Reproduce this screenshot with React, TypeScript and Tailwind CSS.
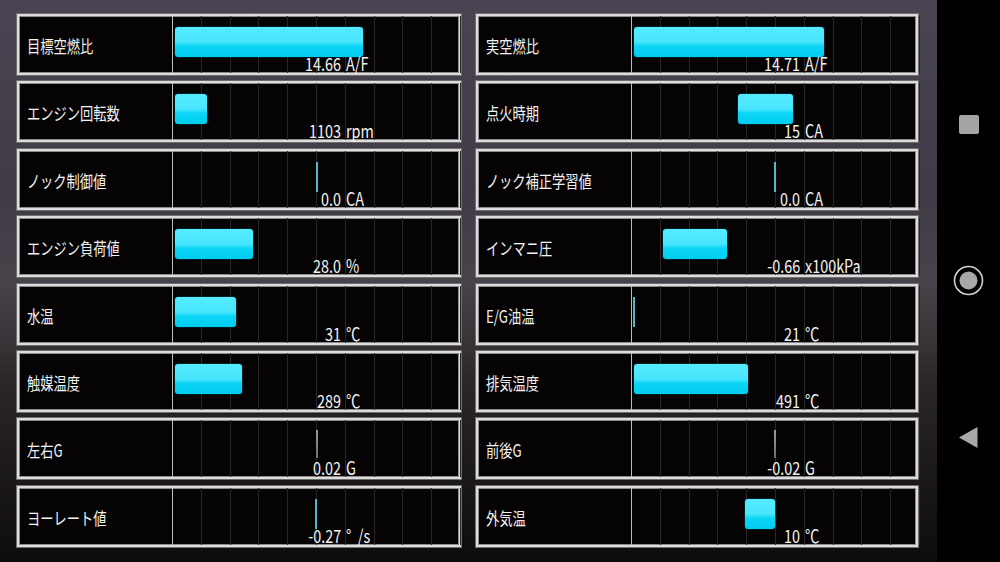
import React from 'react';

type Marker = { kind: 'bar' | 'line' | 'gray'; left: number; width?: number };

type Gauge = {
    label: string;
    value: string;
    unit: string;
    marker: Marker;
};

// left column / right column, row by row
const LEFT: Gauge[] = [
    { label: '目標空燃比', value: '14.66', unit: 'A/F', marker: { kind: 'bar', left: 2, width: 188 } },
    { label: 'エンジン回転数', value: '1103', unit: 'rpm', marker: { kind: 'bar', left: 2, width: 32 } },
    { label: 'ノック制御値', value: '0.0', unit: 'CA', marker: { kind: 'line', left: 143 } },
    { label: 'エンジン負荷値', value: '28.0', unit: '%', marker: { kind: 'bar', left: 2, width: 78 } },
    { label: '水温', value: '31', unit: '℃', marker: { kind: 'bar', left: 2, width: 61 } },
    { label: '触媒温度', value: '289', unit: '℃', marker: { kind: 'bar', left: 2, width: 67 } },
    { label: '左右G', value: '0.02', unit: 'G', marker: { kind: 'gray', left: 143 } },
    { label: 'ヨーレート値', value: '-0.27', unit: '°  /s', marker: { kind: 'line', left: 142 } },
];

const RIGHT: Gauge[] = [
    { label: '実空燃比', value: '14.71', unit: 'A/F', marker: { kind: 'bar', left: 2, width: 190 } },
    { label: '点火時期', value: '15', unit: 'CA', marker: { kind: 'bar', left: 106, width: 55 } },
    { label: 'ノック補正学習値', value: '0.0', unit: 'CA', marker: { kind: 'line', left: 142 } },
    { label: 'インマニ圧', value: '-0.66', unit: 'x100kPa', marker: { kind: 'bar', left: 31, width: 64 } },
    { label: 'E/G油温', value: '21', unit: '℃', marker: { kind: 'line', left: 1 } },
    { label: '排気温度', value: '491', unit: '℃', marker: { kind: 'bar', left: 2, width: 114 } },
    { label: '前後G', value: '-0.02', unit: 'G', marker: { kind: 'gray', left: 142 } },
    { label: '外気温', value: '10', unit: '℃', marker: { kind: 'bar', left: 113, width: 30 } },
];

function GaugeRow({ gauge }: { gauge: Gauge }) {
    const { marker } = gauge;
    return (
        <div className="flex h-[61px] border-2 border-[#dcdcdc] bg-[#050303] shadow-[0_0_0_1px_#6e6e6e,inset_0_0_0_1px_#8c8c8c]">
            {/* Label */}
            <div className="flex w-[154px] shrink-0 items-center border-r border-[#bdbdbd] pl-[8px] pt-[2px]">
                <span className="inline-block origin-left scale-x-[0.78] whitespace-nowrap text-[17px] leading-none text-[#f2f2f2]">
                    {gauge.label}
                </span>
            </div>

            {/* Bar area */}
            <div className="relative flex-1">
                <div className="absolute inset-0 flex">
                    {Array.from({ length: 10 }).map((_, i) => (
                        <div key={i} className="h-full w-[28.8px] shrink-0 border-r border-[#282626]" />
                    ))}
                </div>

                {marker.kind === 'bar' && (
                    <div
                        className="absolute top-[11px] h-[30px] rounded-[3px] bg-[linear-gradient(to_bottom,#55eaff_0%,#48e6fd_48%,#3ae2fb_54%,#0cd4f4_64%,#00cdf0_100%)] shadow-[0_0_2px_rgba(0,210,240,0.5)]"
                        style={{ left: marker.left, width: marker.width }}
                    />
                )}
                {marker.kind === 'line' && (
                    <div
                        className="absolute top-[11px] h-[30px] w-[2px] bg-[#4fb8c8]"
                        style={{ left: marker.left }}
                    />
                )}
                {marker.kind === 'gray' && (
                    <div
                        className="absolute top-[10px] h-[28px] w-[2px] bg-[linear-gradient(to_bottom,#9a9a9a,#6e6e6e)]"
                        style={{ left: marker.left }}
                    />
                )}

                {/* Value */}
                <div className="absolute bottom-[1px] left-0 w-[168px] text-right text-[18px] leading-[18px] text-[#f4f4f4]">
                    <span className="inline-block origin-right scale-x-[0.8] whitespace-nowrap">{gauge.value}</span>
                </div>
                <div className="absolute bottom-[1px] left-[173px] text-[18px] leading-[18px] text-[#f4f4f4]">
                    <span className="inline-block origin-left scale-x-[0.8] whitespace-pre">{gauge.unit}</span>
                </div>
            </div>
        </div>
    );
}

function NavBar() {
    return (
        <div className="flex w-[63px] shrink-0 flex-col items-center justify-center gap-[131px] bg-black">
            <div className="h-[19px] w-[20px] rounded-[2px] bg-[#a4a4a4]" />
            <svg width="31" height="31" viewBox="0 0 31 31">
                <circle cx="15.5" cy="15.5" r="14" fill="none" stroke="#d2d2d2" strokeWidth="1.6" />
                <circle cx="15.5" cy="15.5" r="9" fill="#a8a8a8" />
            </svg>
            <svg width="19" height="21" viewBox="0 0 19 21">
                <polygon points="18.5,0 18.5,21 0,10.5" fill="#a8a8a8" />
            </svg>
        </div>
    );
}

export default function App() {
    const rows: Gauge[] = [];
    LEFT.forEach((g, i) => {
        rows.push(g, RIGHT[i]);
    });

    return (
        <div className="flex h-[562px] w-[1000px] overflow-hidden font-['Noto_Sans_CJK_JP',sans-serif]">
            <div className="flex-1 bg-[linear-gradient(180deg,#4a4452_0%,#403b46_35%,#48434a_50%,#2b2729_68%,#0e0b0c_100%)] pl-[17px] pt-[14px]">
                <div className="grid grid-cols-[444px_442px] gap-x-[15px] gap-y-[6.4px]">
                    {rows.map((g) => (
                        <GaugeRow key={g.label} gauge={g} />
                    ))}
                </div>
            </div>
            <NavBar />
        </div>
    );
}
